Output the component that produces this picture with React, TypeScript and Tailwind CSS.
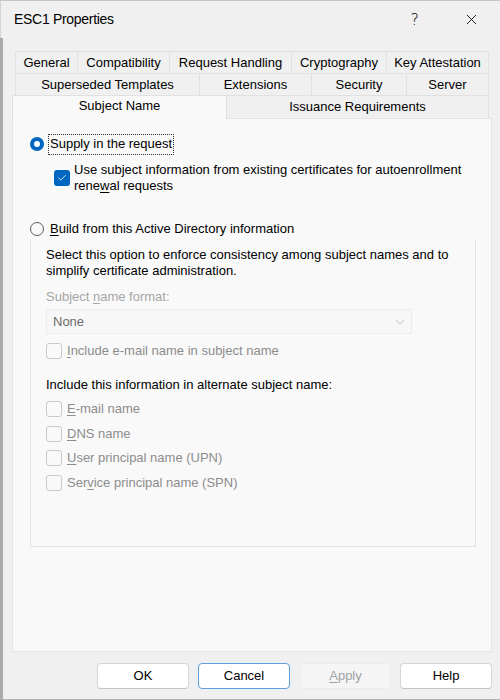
import { ChevronDown, Check, X } from "lucide-react"

const rowOne = [
  { label: "General", w: "w-[62px]" },
  { label: "Compatibility", w: "w-[92px]" },
  { label: "Request Handling", w: "w-[122px]" },
  { label: "Cryptography", w: "w-[95px]" },
  { label: "Key Attestation", w: "w-[103px]" },
]

const rowTwo = [
  { label: "Superseded Templates", w: "w-[184px]" },
  { label: "Extensions", w: "w-[112px]" },
  { label: "Security", w: "w-[95px]" },
  { label: "Server", w: "w-[83px]" },
]

function Tab({ label, w, last }: { label: string; w: string; last?: boolean }) {
  return (
    <div
      className={`${w} h-full flex items-center justify-center border-t border-l border-[#e1e1e1] bg-[#f0f0f0] ${
        last ? "border-r" : ""
      }`}
    >
      {label}
    </div>
  )
}

function DisabledCheck({ children, className = "" }: { children: React.ReactNode; className?: string }) {
  return (
    <div className={`flex items-center h-[16px] ${className}`}>
      <span className="w-[16px] h-[16px] rounded-[3px] border border-[#cacaca] bg-[#f9f9f9] shrink-0" />
      <span className="ml-[5px] text-[#8c8c8c]">{children}</span>
    </div>
  )
}

function Button({ children, variant = "normal" }: { children: React.ReactNode; variant?: "normal" | "default" | "disabled" }) {
  const styles = {
    normal: "bg-white border-[#d6d6d6] border-b-[#c4c4c4] text-black",
    default: "bg-white border-[#5a9fde] text-black",
    disabled: "bg-[#f5f5f5] border-[#ebebeb] text-[#a2a2a2]",
  }[variant]
  return (
    <div className={`h-[26px] flex items-center justify-center rounded-[4px] border ${styles}`}>
      {children}
    </div>
  )
}

export default function App() {
  return (
    <div className="w-[500px] h-[700px] bg-[#f0f0f0] border-t border-[#c6c6c6] flex flex-col font-['Liberation_Sans',sans-serif] text-[13px] text-black">
      {/* Title bar */}
      <div className="h-[37px] shrink-0 border-l border-[#d4d4d4] flex items-center pl-[13px]">
        <span className="text-[14px] tracking-[-0.3px]">ESC1 Properties</span>
        <span className="ml-auto mr-[44px] text-[16px] font-['DejaVu_Sans',sans-serif] font-light">?</span>
        <X className="w-[17px] h-[17px] mr-[20px]" strokeWidth={1.2} />
      </div>

      {/* Body */}
      <div className="flex-1 border-l-[3px] border-b border-[#a9a9a9] border-b-[#b0b0b0] pl-[9px] pt-[13px] flex flex-col">
        {/* Tabs */}
        <div className="w-[480px]">
          <div className="h-[22px] flex mx-[3px]">
            {rowOne.map((t, i) => (
              <Tab key={t.label} {...t} last={i === rowOne.length - 1} />
            ))}
          </div>
          <div className="h-[22px] flex mx-[3px]">
            {rowTwo.map((t, i) => (
              <Tab key={t.label} {...t} last={i === rowTwo.length - 1} />
            ))}
          </div>
          <div className="h-[23px] flex items-end">
            <div className="w-[215px] h-[24px] -mt-[1px] flex items-center justify-center border-t border-l border-r border-[#e1e1e1] bg-[#f9f9f9] relative z-10 -mb-[1px] pb-[3px]">
              Subject Name
            </div>
            <div className="w-[262px] h-[23px] flex items-center justify-center border-t border-r border-[#e1e1e1] bg-[#f0f0f0]">
              Issuance Requirements
            </div>
          </div>
        </div>

        {/* Panel */}
        <div className="w-[480px] h-[534px] bg-[#f9f9f9] border border-[#e3e3e3] pt-[15px] pl-[17px] flex flex-col">
          {/* Supply in the request */}
          <div className="flex items-center h-[20px]">
            <span className="w-[14px] h-[14px] rounded-full bg-[#0067c0] flex items-center justify-center">
              <span className="w-[6px] h-[6px] rounded-full bg-white" />
            </span>
            <span className="ml-[5px] px-[1px] h-[19px] flex items-center outline outline-1 outline-dotted outline-[#333]">
              Supply in the request
            </span>
          </div>
          <div className="flex items-center mt-[8px] ml-[24px]">
            <span className="w-[16px] h-[16px] rounded-[3px] bg-[#0067c0] flex items-center justify-center shrink-0">
              <Check className="w-[10px] h-[10px] text-white" strokeWidth={2} />
            </span>
            <span className="ml-[4px] leading-[16px]">
              Use subject information from existing certificates for autoenrollment
              <br />
              rene<u className="underline-offset-2">w</u>al requests
            </span>
          </div>

          {/* Build from AD */}
          <div className="flex items-center h-[20px] mt-[25px]">
            <span className="w-[14px] h-[14px] rounded-full border border-[#5c5c5c] bg-[#f9f9f9]" />
            <span className="ml-[6px]">
              <u className="underline-offset-2">B</u>uild from this Active Directory information
            </span>
          </div>
          <div className="w-[446px] h-[308px] border-l border-r border-b border-[#e3e3e3] pl-[15px] pt-[8px] flex flex-col">
            <p className="leading-[16px]">
              Select this option to enforce consistency among subject names and to
              <br />
              simplify certificate administration.
            </p>
            <div className="mt-[10px] h-[16px] flex items-center text-[#a6a6a6]">
              <span>
                Subject <u className="underline-offset-2">n</u>ame format:
              </span>
            </div>
            <div className="mt-[4px] w-[366px] h-[25px] border border-[#ececec] bg-[#f7f7f7] flex items-center pl-[6px] pr-[4px] text-[#6e6e6e]">
              None
              <ChevronDown className="ml-auto w-[14px] h-[14px] text-[#a8a8a8]" strokeWidth={1.2} />
            </div>
            <DisabledCheck className="mt-[9px]">
              <u className="underline-offset-2">I</u>nclude e-mail name in subject name
            </DisabledCheck>
            <div className="mt-[18px] h-[16px] flex items-center">
              Include this information in alternate subject name:
            </div>
            <DisabledCheck className="mt-[8px]">
              <u className="underline-offset-2">E</u>-mail name
            </DisabledCheck>
            <DisabledCheck className="mt-[9px]">
              <u className="underline-offset-2">D</u>NS name
            </DisabledCheck>
            <DisabledCheck className="mt-[8px]">
              <u className="underline-offset-2">U</u>ser principal name (UPN)
            </DisabledCheck>
            <DisabledCheck className="mt-[9px]">
              Ser<u className="underline-offset-2">v</u>ice principal name (SPN)
            </DisabledCheck>
          </div>
        </div>

        {/* Buttons */}
        <div className="w-[480px] mt-[11px] flex justify-end">
          <div className="w-[92px]">
            <Button>OK</Button>
          </div>
          <div className="w-[92px] ml-[9px]">
            <Button variant="default">Cancel</Button>
          </div>
          <div className="w-[91px] ml-[10px]">
            <Button variant="disabled">
              <span>
                <u className="underline-offset-2">A</u>pply
              </span>
            </Button>
          </div>
          <div className="w-[92px] ml-[9px]">
            <Button>Help</Button>
          </div>
        </div>
      </div>
    </div>
  )
}
